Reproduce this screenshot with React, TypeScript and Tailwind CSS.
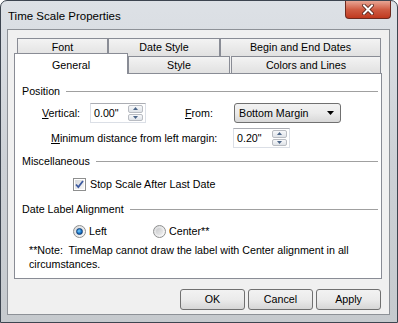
import React from 'react';

function Tab({ label, w, selected }: { label: string; w: string; selected?: boolean }) {
  if (selected) {
    return (
      <div className={`${w} relative z-10 -mb-px flex h-[21px] items-start justify-center border border-b-0 border-[#898c95] bg-white pt-[3px]`}>
        {label}
      </div>
    );
  }
  return (
    <div className={`${w} flex h-full items-center justify-center border border-b-0 border-[#898c95] bg-gradient-to-b from-[#f3f3f3] to-[#e1e1e1]`}>
      {label}
    </div>
  );
}

function GroupHeader({ label, className }: { label: string; className?: string }) {
  return (
    <div className={`flex items-center leading-[13px] ${className ?? ''}`}>
      <span>{label}</span>
      <div className="ml-[6px] h-px flex-1 bg-[#a0a0a0]" />
    </div>
  );
}

function SpinBox({ value, w }: { value: string; w: string }) {
  return (
    <div className={`${w} flex h-[20px] items-center border border-[#dbdfe6] border-t-[#abadb3] bg-white pl-[3px]`}>
      <span className="flex-1">{value}</span>
      <div className="mr-[2px] flex h-[16px] w-[15px] flex-col gap-px">
        <div className="flex flex-1 items-center justify-center rounded-[2px] border border-[#b9bcc2] bg-gradient-to-b from-[#f7f8fa] to-[#dfe3e8]">
          <svg width="5" height="3" viewBox="0 0 5 3"><path d="M0 3 L2.5 0 L5 3 Z" fill="#4c6688" /></svg>
        </div>
        <div className="flex flex-1 items-center justify-center rounded-[2px] border border-[#b9bcc2] bg-gradient-to-b from-[#f7f8fa] to-[#dfe3e8]">
          <svg width="5" height="3" viewBox="0 0 5 3"><path d="M0 0 L5 0 L2.5 3 Z" fill="#4c6688" /></svg>
        </div>
      </div>
    </div>
  );
}

function Checkbox() {
  return (
    <div className="flex h-[13px] w-[13px] items-center justify-center border border-[#8e8f8f] bg-white">
      <div className="flex h-[9px] w-[9px] items-center justify-center bg-gradient-to-br from-[#d6d8db] to-[#f8f8f8]">
        <svg width="9" height="9" viewBox="0 0 9 9">
          <path d="M1 4.5 L3.3 7 L8 1" fill="none" stroke="#3d5aa0" strokeWidth="1.8" />
        </svg>
      </div>
    </div>
  );
}

function Radio({ checked }: { checked?: boolean }) {
  return (
    <div className="flex h-[13px] w-[13px] items-center justify-center rounded-full border border-[#8e8f8f] bg-gradient-to-br from-[#d9dadb] to-[#fbfbfb]">
      {checked ? (
        <div className="h-[7px] w-[7px] rounded-full border border-[#123f78] bg-[radial-gradient(circle_at_40%_40%,#7fd3ff,#1673c8_55%,#0b3f80)]" />
      ) : (
        <div className="h-[7px] w-[7px] rounded-full bg-gradient-to-br from-[#c9cacc] to-[#eeeeee]" />
      )}
    </div>
  );
}

function Button({ label }: { label: string }) {
  return (
    <div className="flex h-[21px] w-[65px] items-center justify-center rounded-[3px] border border-[#707070] bg-gradient-to-b from-[#f2f2f2] via-[#ebebeb] to-[#d6d6d6]">
      {label}
    </div>
  );
}

export default function App() {
  return (
    <div className="flex h-[323px] w-[398px] flex-col rounded-t-[7px] border border-[#3d4550] bg-gradient-to-b from-[#dde1e6] via-[#cdd1d6] to-[#c6cace] font-['Liberation_Sans',Arial,sans-serif] text-[10.7px] text-black">
      {/* Title bar */}
      <div className="flex h-[28px] items-start">
        <div className="pl-[7px] pt-[8px] text-[11.5px] leading-[15px] text-black">Time Scale Properties</div>
        <div className="ml-auto mr-[6px] flex h-[18px] w-[46px] items-center justify-center rounded-b-[4px] border border-t-0 border-[#6e2a1e] bg-gradient-to-b from-[#e7a594] via-[#cf5c43] to-[#c0391e]">
          <svg width="12" height="11" viewBox="0 0 12 11">
            <path d="M2 1.5 L10 9.5 M10 1.5 L2 9.5" stroke="#4a1a12" strokeWidth="3.6" strokeLinecap="square" />
            <path d="M2 1.5 L10 9.5 M10 1.5 L2 9.5" stroke="#ffffff" strokeWidth="2" strokeLinecap="square" />
          </svg>
        </div>
      </div>

      {/* Client area */}
      <div className="mb-[7px] ml-[6px] mr-[7px] flex flex-1 flex-col border border-[#8d9197] bg-[#f0f0f0] pl-[6px] pr-[7px] pt-[8px]">
        {/* Tabs */}
        <div className="flex h-[18px] pl-[3px]">
          <Tab label="Font" w="w-[91px]" />
          <Tab label="Date Style" w="w-[112px]" />
          <Tab label="Begin and End Dates" w="w-[161px]" />
        </div>
        <div className="flex h-[17px] items-end">
          <Tab label="General" w="w-[114px]" selected />
          <Tab label="Style" w="w-[102px]" />
          <div className="w-px" />
          <Tab label="Colors and Lines" w="w-[150px]" />
        </div>

        {/* Panel */}
        <div className="flex h-[206px] w-[368px] flex-col border border-[#898c95] bg-white pl-[7px] pr-[3px] pt-[11px]">
          <GroupHeader label="Position" />
          <div className="mt-[5px] flex h-[20px] items-center pl-[20px]">
            <span className="w-[48px]"><u>V</u>ertical:</span>
            <SpinBox value={'0.00"'} w="w-[56px]" />
            <span className="ml-[39px] w-[49px]"><u>F</u>rom:</span>
            <div className="flex h-[20px] w-[107px] items-center rounded-[3px] border border-[#707070] bg-gradient-to-b from-[#f2f2f2] via-[#ebebeb] to-[#d8d8d8] pl-[4px] pr-[6px]">
              <span className="flex-1">Bottom Margin</span>
              <svg width="7" height="4" viewBox="0 0 7 4"><path d="M0 0 L7 0 L3.5 4 Z" fill="#000" /></svg>
            </div>
          </div>
          <div className="mt-[5px] flex h-[20px] items-center pl-[29px]">
            <span className="w-[182px]"><u>M</u>inimum distance from left margin:</span>
            <SpinBox value={'0.20"'} w="w-[57px]" />
          </div>

          <GroupHeader label="Miscellaneous" className="mt-[7px]" />
          <div className="mt-[8px] flex h-[16px] items-center pl-[51px]">
            <Checkbox />
            <span className="ml-[4px]">Stop Scale After Last Date</span>
          </div>

          <GroupHeader label="Date Label Alignment" className="mt-[11px]" />
          <div className="mt-[7px] flex h-[16px] items-center pl-[51px]">
            <div className="flex w-[80px] items-center">
              <Radio checked />
              <span className="ml-[3px]">Left</span>
            </div>
            <Radio />
            <span className="ml-[3px]">Center**</span>
          </div>
          <div className="mt-[4px] pl-[7px] leading-[14px]">
            **Note:&nbsp; TimeMap cannot draw the label with Center alignment in all
            <br />
            circumstances.
          </div>
        </div>

        {/* Buttons */}
        <div className="mt-[10px] flex justify-end gap-[3px] pr-px">
          <Button label="OK" />
          <Button label="Cancel" />
          <Button label="Apply" />
        </div>
      </div>
    </div>
  );
}
